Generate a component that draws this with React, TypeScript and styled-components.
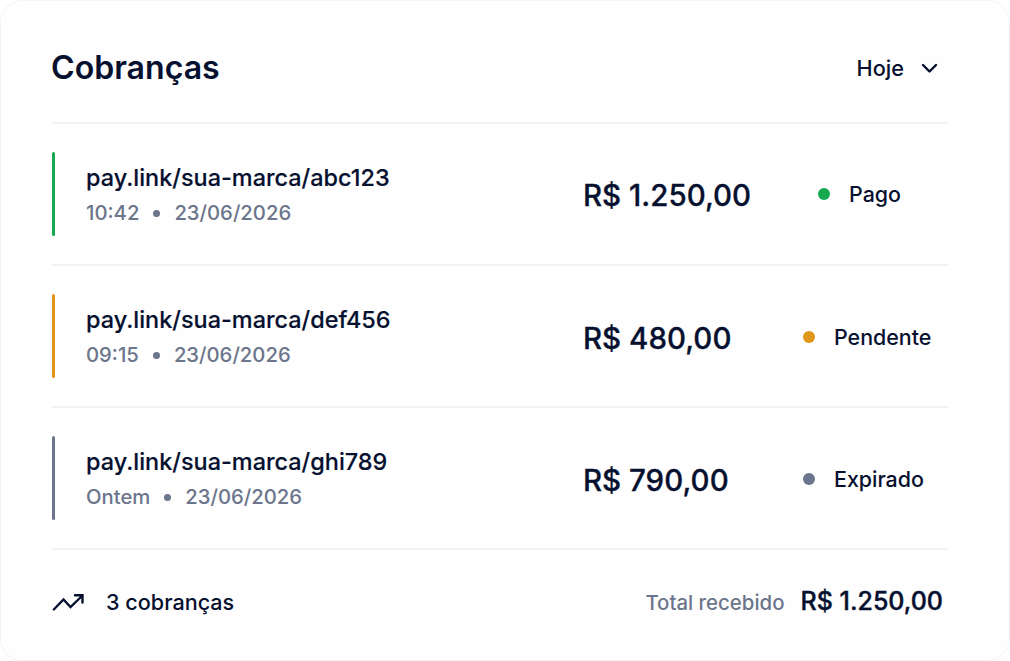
import styled, { createGlobalStyle } from "styled-components";

const GlobalStyle = createGlobalStyle`
  * {
    box-sizing: border-box;
  }

  body {
    margin: 0;
    background: #ffffff;
    color: #06102f;
    font-family: Inter, "Liberation Sans", sans-serif;
    font-weight: 500;
  }
`;

const Card = styled.main`
  display: flex;
  flex-direction: column;
  width: 1010px;
  height: 661px;
  padding: 0 61px 0 51px;
  border: 1px solid #f3f4f5;
  border-radius: 22px;
  background: #fefefe;
`;

const Header = styled.header`
  display: flex;
  align-items: center;
  justify-content: space-between;
  height: 121px;
  padding: 13px 10px 0 0;
`;

const Title = styled.h1`
  margin: 0 0 0 -1px;
  font-size: 32.1px;
  font-weight: 600;
  line-height: 40px;
`;

const Period = styled.button`
  display: flex;
  align-items: center;
  gap: 17px;
  padding: 0;
  border: 0;
  background: none;
  color: inherit;
  font: inherit;
  font-size: 21.7px;
  line-height: 28px;
`;

const Accent = styled.div<{ $color: string }>`
  width: 3px;
  height: 84px;
  margin-bottom: 2px;
  border-radius: 2px;
  background: ${(props) => props.$color};
`;

const Details = styled.div`
  width: 497px;
  padding-left: 31px;
`;

const Link = styled.div`
  font-size: 23.45px;
  line-height: 30px;
  -webkit-text-stroke: 0.15px currentColor;
`;

const Meta = styled.div`
  display: flex;
  align-items: center;
  gap: 14px;
  margin-top: 6px;
  color: #6b758b;
  font-size: 20.25px;
  line-height: 28px;
`;

const Separator = styled.span`
  width: 7px;
  height: 7px;
  border-radius: 50%;
  background: currentColor;
`;

const Amount = styled.div`
  width: 251px;
  padding: 1px 0 0 31px;
  font-size: 29.5px;
  line-height: 36px;
  -webkit-text-stroke: 0.3px currentColor;
`;

const Status = styled.div<{ $indent?: number }>`
  display: flex;
  align-items: center;
  gap: 19px;
  padding-left: ${(props) => props.$indent ?? 0}px;
  font-size: 21.4px;
  line-height: 28px;
`;

const Row = styled.section`
  display: flex;
  align-items: center;
  height: 142px;
  padding-top: 2px;
  border-top: 2px solid #f0f1f3;

  &:first-of-type ${Amount}, &:first-of-type ${Status} {
    margin-bottom: 2px;
  }
`;

const Dot = styled.span<{ $color: string }>`
  width: 12px;
  height: 12px;
  border-radius: 50%;
  background: ${(props) => props.$color};
`;

const Footer = styled.footer`
  display: flex;
  align-items: center;
  height: 107px;
  padding-bottom: 2px;
  border-top: 2px solid #f0f1f3;
  font-size: 21.6px;
`;

const Count = styled.span`
  margin-left: 22px;
`;

const TotalLabel = styled.span`
  margin: 1px 0 0 auto;
  color: #6b758b;
  font-size: 20.4px;
`;

const Total = styled.strong`
  margin: 0 5px 2px 16px;
  font-size: 25px;
  font-weight: 500;
  -webkit-text-stroke: 0.4px currentColor;
`;

const charges = [
  {
    link: "pay.link/sua-marca/abc123",
    time: "10:42",
    amount: "R$ 1.250,00",
    status: "Pago",
    color: "#16a950",
    indent: 15,
  },
  {
    link: "pay.link/sua-marca/def456",
    time: "09:15",
    amount: "R$ 480,00",
    status: "Pendente",
    color: "#e0961a",
  },
  {
    link: "pay.link/sua-marca/ghi789",
    time: "Ontem",
    amount: "R$ 790,00",
    status: "Expirado",
    color: "#6b758b",
  },
];

const ChevronIcon = () => (
  <svg width="17" height="11" viewBox="0 0 17 11" fill="none">
    <path d="m2 2 6.5 6.5L15 2" stroke="currentColor" strokeWidth="2.4" strokeLinecap="round" strokeLinejoin="round" />
  </svg>
);

const TrendIcon = () => (
  <svg width="32" height="20" viewBox="0 0 32 20" fill="none">
    <path d="M1.8 17.5 11.5 7.5 18.5 15 30 4M23 3.2h7.5v7.3" stroke="currentColor" strokeWidth="2.4" strokeLinecap="round" />
  </svg>
);

const App = () => (
  <>
    <GlobalStyle />
    <Card>
      <Header>
        <Title>Cobranças</Title>
        <Period>
          Hoje
          <ChevronIcon />
        </Period>
      </Header>
      {charges.map((charge) => (
        <Row key={charge.link}>
          <Accent $color={charge.color} />
          <Details>
            <Link>{charge.link}</Link>
            <Meta>
              {charge.time}
              <Separator />
              23/06/2026
            </Meta>
          </Details>
          <Amount>{charge.amount}</Amount>
          <Status $indent={charge.indent}>
            <Dot $color={charge.color} />
            {charge.status}
          </Status>
        </Row>
      ))}
      <Footer>
        <TrendIcon />
        <Count>3 cobranças</Count>
        <TotalLabel>Total recebido</TotalLabel>
        <Total>R$ 1.250,00</Total>
      </Footer>
    </Card>
  </>
);

export default App;
